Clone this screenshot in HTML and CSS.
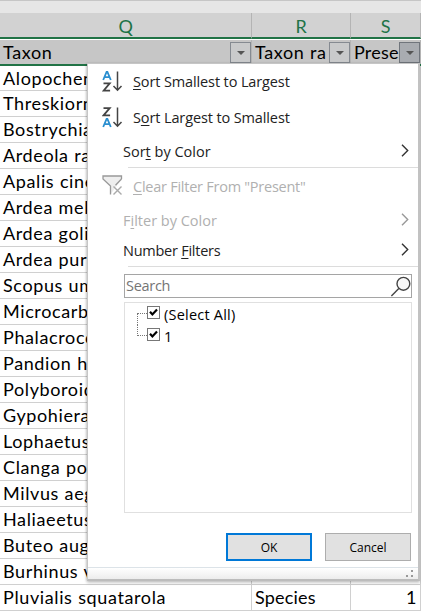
FILE: index.html
```html
<!DOCTYPE html>
<html lang="en">
<head>
<meta charset="utf-8">
<title>Filter menu</title>
<link rel="stylesheet" href="styles.css">
</head>
<body>
<main class="sheet">
  <div class="topbar"></div>
  <div class="row letters"><div>Q</div><div>R</div><div>S</div></div>
  <div class="row heads">
    <div><span>Taxon</span><i class="drop"></i></div>
    <div><span>Taxon ra</span><i class="drop"></i></div>
    <div><span class="snug">Prese</span><i class="drop on"></i></div>
  </div>
  <div class="row first"><div>Alopochen</div><div></div><div></div></div>
  <div class="row"><div>Threskiorn</div><div></div><div></div></div>
  <div class="row"><div>Bostrychia</div><div></div><div></div></div>
  <div class="row"><div>Ardeola ra</div><div></div><div></div></div>
  <div class="row"><div>Apalis cine</div><div></div><div></div></div>
  <div class="row"><div>Ardea mel</div><div></div><div></div></div>
  <div class="row"><div>Ardea goli</div><div></div><div></div></div>
  <div class="row"><div>Ardea pur</div><div></div><div></div></div>
  <div class="row"><div>Scopus um</div><div></div><div></div></div>
  <div class="row"><div>Microcarb</div><div></div><div></div></div>
  <div class="row"><div>Phalacroco</div><div></div><div></div></div>
  <div class="row"><div>Pandion h</div><div></div><div></div></div>
  <div class="row"><div>Polyboroid</div><div></div><div></div></div>
  <div class="row"><div>Gypohiera</div><div></div><div></div></div>
  <div class="row"><div>Lophaetus</div><div></div><div></div></div>
  <div class="row"><div>Clanga po</div><div></div><div></div></div>
  <div class="row"><div>Milvus aeg</div><div></div><div></div></div>
  <div class="row"><div>Haliaeetus</div><div></div><div></div></div>
  <div class="row"><div>Buteo aug</div><div></div><div></div></div>
  <div class="row"><div>Burhinus v</div><div class="snug">Species</div><div></div></div>
  <div class="row"><div>Pluvialis squatarola</div><div class="snug">Species</div><div class="num">1</div></div>
</main>

<section class="menu">
  <div class="item icon-item">
    <svg class="az" viewBox="0 0 22 24"><g fill="none" stroke-width="1.8"><path stroke="#2b8fd0" d="M1.2 10 4.6 1.8h.8L8.8 10M2.6 7.2h4.8"/><path stroke="#444" d="M1.5 13.4h6.2L1.6 20.7h6.5"/><path stroke="#444" stroke-width="1.5" d="M15.5 1.5v18.7M11.5 16l4 4.2 4-4.2"/></g></svg>
    <span class="tight"><u>S</u>ort Smallest to Largest</span>
  </div>
  <div class="item icon-item">
    <svg class="az" viewBox="0 0 22 24"><g fill="none" stroke-width="1.8"><path stroke="#444" d="M1.5 2.2h6.2L1.6 9.3h6.5"/><path stroke="#2b8fd0" d="M1.2 21 4.6 12.8h.8L8.8 21M2.6 18.2h4.8"/><path stroke="#444" stroke-width="1.5" d="M15.5 1.5v18.7M11.5 16l4 4.2 4-4.2"/></g></svg>
    <span class="tight">S<u>o</u>rt Largest to Smallest</span>
  </div>
  <div class="item sub sort"><span>Sor<u>t</u> by Color</span><svg class="chev" viewBox="0 0 8 13"><path d="M1 .8 6.7 6.5 1 12.2"/></svg></div>
  <hr>
  <div class="item icon-item clear off">
    <svg class="funnel" viewBox="0 0 22 21"><path fill="#eee" stroke="#999" stroke-width="1.3" d="M19.5 4V1H1v3l7.5 7v8.5"/><path fill="none" stroke="#999" stroke-width="1.3" d="M19.5 4l-6 6.3"/><path fill="none" stroke="#aaa" stroke-width="1.4" d="M11.5 11.5l8 8M19.5 11.5l-8 8"/></svg>
    <span class="tighter"><u>C</u>lear Filter From "Present"</span>
  </div>
  <div class="item sub bycolor off"><span>F<u>i</u>lter by Color</span><svg class="chev" viewBox="0 0 8 13"><path d="M1 .8 6.7 6.5 1 12.2"/></svg></div>
  <div class="item sub numf"><span class="tighter">Number <u>F</u>ilters</span><svg class="chev" viewBox="0 0 8 13"><path d="M1 .8 6.7 6.5 1 12.2"/></svg></div>
  <hr>
  <div class="search"><span>Search</span><svg viewBox="0 0 21 21"><circle cx="13.4" cy="7.8" r="6.4"/><path d="M8.8 12.4 1.4 20"/></svg></div>
  <div class="list">
    <div class="check"><i class="branch top"></i><svg class="box" viewBox="0 0 11 11"><path d="M2 4.8 4.4 7.4 9 2.6"/></svg><span class="wide">(Select All)</span></div>
    <div class="check"><i class="branch bottom"></i><svg class="box" viewBox="0 0 11 11"><path d="M2 4.8 4.4 7.4 9 2.6"/></svg><span>1</span></div>
  </div>
  <div class="buttons"><div class="btn ok">OK</div><div class="btn">Cancel</div></div>
  <footer><svg viewBox="0 0 8 8"><path d="M5 0h2v2H5zM0 5h2v2H0zM5 5h2v2H5z"/></svg></footer>
</section>
</body>
</html>
```
FILE: styles.css
```css
* { box-sizing: border-box; }
body { margin: 0; width: 421px; height: 611px; overflow: hidden; position: relative; background: #fff; }
.sheet { font: 18px/25px Lato, sans-serif; letter-spacing: .62px; word-spacing: .4px; color: #000; }
.topbar { height: 13px; background: #e6e6e6; border-top: 1px solid #c6c6c6; }
.row { display: grid; grid-template-columns: 252px 99px 70px; height: 26px; white-space: nowrap; }
.row > div { border-right: 1px solid #d0d0d0; border-bottom: 1px solid #d0d0d0; padding-left: 3px; overflow: hidden; }
.row .num { text-align: right; padding-right: 3px; }
.row .snug { letter-spacing: .2px; }
.letters { height: 27px; background: #d2d2d2; color: #217346; border-bottom: 1px solid #fff; }
.letters > div { padding: 0 0 0 1px; text-align: center; line-height: 27px; border-bottom: 2px solid #217346; border-right-color: #b4b4b4; }
.heads { height: 24px; background: #c6c6c6; }
.heads > div { display: flex; justify-content: space-between; line-height: 24px; border-bottom: 0; border-right-color: #b4b4b4; }
.drop { width: 21px; height: 21px; margin-top: 2px; flex: none; border: 1px solid #858a91; background: #c9cacb; display: flex; align-items: center; justify-content: center; }
.drop::after { content: ""; border: 4px solid transparent; border-top-color: #555; border-bottom: 0; }
.drop.on { background: #a9acb1; border-color: #70757c; }
.first { height: 27px; border-top: 2px solid #217346; }

.menu { position: absolute; left: 87px; top: 63px; width: 333px; height: 518px; background: #fff; border: 1px solid #c6c6c6; border-right: 2px solid #c2c2c2; border-bottom: 2px solid #bcbcbc; box-shadow: -1px 0 2px #0002, 0 2px 3px #0003; font: 14.5px/20px "Open Sans", sans-serif; color: #222; white-space: nowrap; overflow: hidden; display: flex; flex-direction: column; }
.tight { letter-spacing: -.12px; }
.tighter { letter-spacing: -.25px; }
.wide { letter-spacing: .22px; }
.item { height: 36px; display: flex; align-items: center; flex: none; }
.item u { text-underline-offset: 2px; text-decoration-thickness: 1px; }
.icon-item { padding-left: 14px; }
.icon-item span { margin-left: 9px; }
.az { width: 22px; height: 24px; }
.funnel { width: 22px; height: 21px; margin-top: -3px; }
.sub { padding-left: 35px; padding-right: 9px; justify-content: space-between; }
.sub .chev { margin-top: -3px; }
.sort { height: 31px; }
.clear { height: 38px; }
.bycolor { height: 29px; }
.numf { height: 31px; }
.off { color: #b0b0b0; }
.chev { width: 8px; height: 13px; fill: none; stroke: #333; stroke-width: 1.4; }
.off .chev { stroke: #999; }
.menu hr { height: 1px; flex: none; border: 0; background: #dcdcdc; margin: 0 0 0 40px; }
.search { margin: 7px 0 0 36px; width: 288px; height: 24px; flex: none; border: 1px solid #a5a5a5; display: flex; justify-content: space-between; align-items: center; padding-left: 1px; color: #757575; letter-spacing: -.3px; }
.search svg { width: 21px; height: 21px; fill: #f8f8f8; stroke: #444; stroke-width: 1.4; }
.list { margin: 4px 0 0 36px; width: 288px; height: 211px; flex: none; border: 1px solid #e0e0e0; padding-left: 12px; color: #000; }
.check { height: 22px; display: flex; align-items: center; }
.check span { margin-top: 1px; }
.box { width: 13px; height: 13px; margin: -3px 4px 0 0; border: 1px solid #777; fill: none; stroke: #000; stroke-width: 2.2; }
.branch { width: 10px; height: 12px; border-left: 1px dotted #777; }
.branch.top { border-top: 1px dotted #777; align-self: flex-end; }
.branch.bottom { border-bottom: 1px dotted #777; align-self: flex-start; height: 11px; }
.buttons { display: flex; gap: 13px; margin: 20px 0 0 138px; flex: none; }
.btn { width: 86px; height: 28px; border: 1px solid #adadad; background: #e1e1e1; text-align: center; font-size: 12px; line-height: 27px; color: #000; }
.ok { border: 2px solid #0078d7; line-height: 25px; }
footer { margin-top: 6px; height: 13px; border-top: 1px solid #dce3e8; background: linear-gradient(#fff, #ebebeb); display: flex; justify-content: flex-end; padding: 2px 4px; }
footer svg { width: 8px; height: 8px; fill: #999; }
```
